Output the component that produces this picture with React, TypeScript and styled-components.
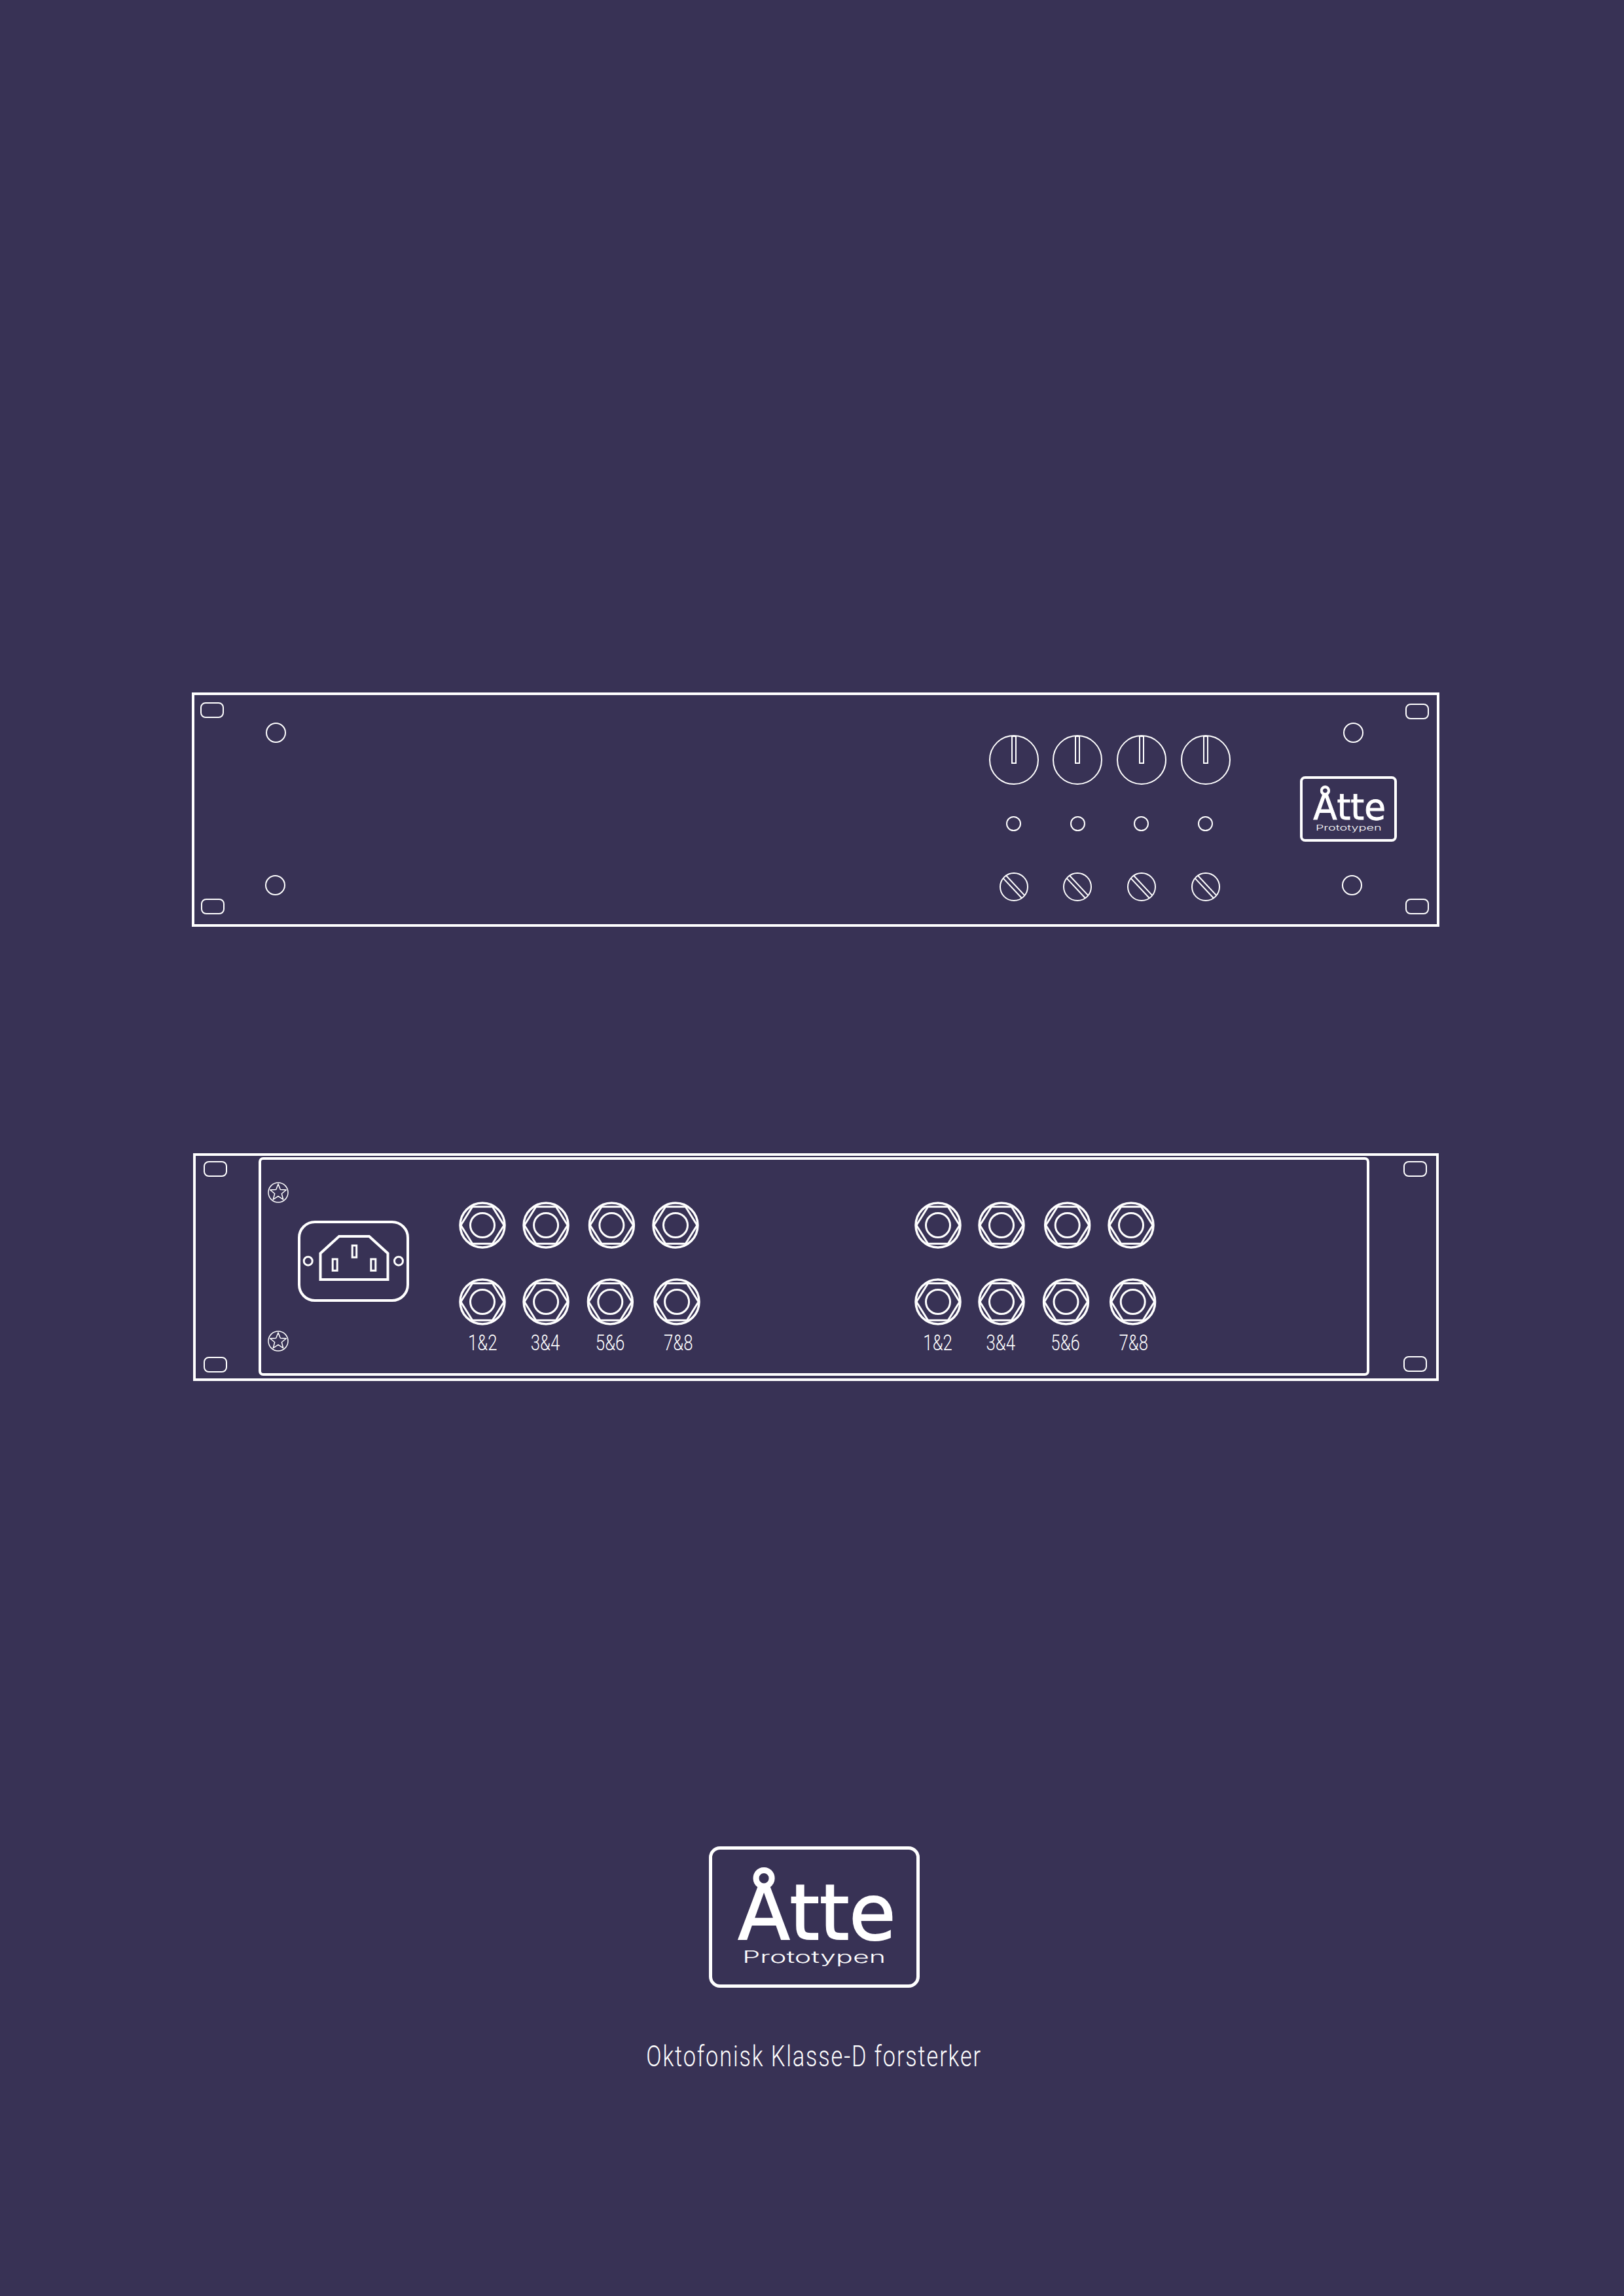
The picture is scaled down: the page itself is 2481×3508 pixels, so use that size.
import styled, { createGlobalStyle } from "styled-components";

const line = "#ffffff";
const background = "#383255";

const GlobalStyle = createGlobalStyle`
  html, body {
    margin: 0;
    padding: 0;
    background: ${background};
  }
  * {
    box-sizing: border-box;
  }
`;

const Page = styled.main`
  width: 2481px;
  height: 3508px;
  padding: 1058px 0 0 11px;
  display: flex;
  flex-direction: column;
  align-items: center;
  background: ${background};
  color: ${line};
  overflow: hidden;
`;

const FrontPanel = styled.section`
  width: 1906px;
  height: 358px;
  border: 4px solid ${line};
  display: flex;
`;

const RearPanel = styled.section`
  width: 1903px;
  height: 348px;
  margin-top: 346px;
  border: 4px solid ${line};
  display: flex;
`;

const EarColumn = styled.div<{ $width: number; $left: number; $top: number; $bottom: number }>`
  width: ${(p) => p.$width}px;
  padding: ${(p) => p.$top}px 0 ${(p) => p.$bottom}px ${(p) => p.$left}px;
  display: flex;
  flex-direction: column;
  justify-content: space-between;
  flex: none;
`;

const EarSlot = styled.span<{ $shift?: number }>`
  display: block;
  width: 36px;
  height: 24px;
  margin-left: ${(p) => p.$shift ?? 0}px;
  border: 2px solid ${line};
  border-radius: 8px;
`;

const MountColumn = styled.div`
  width: 31px;
  margin-left: 63px;
  padding: 42px 0 44px;
  display: flex;
  flex-direction: column;
  justify-content: space-between;
  flex: none;
`;

const MountHole = styled.span<{ $shift?: number }>`
  display: block;
  width: 31px;
  height: 31px;
  margin-left: ${(p) => p.$shift ?? 0}px;
  border: 2px solid ${line};
  border-radius: 50%;
`;

const ControlGrid = styled.div`
  width: 390.4px;
  height: 291px;
  margin: 50.5px 0 0 1063px;
  display: grid;
  grid-template-columns: repeat(4, 97.6px);
  grid-template-rows: repeat(3, 97px);
  place-items: center;
  flex: none;
`;

const LogoColumn = styled.div`
  width: 148px;
  margin-left: 95.6px;
  padding: 42px 0 44px;
  display: flex;
  flex-direction: column;
  justify-content: space-between;
  flex: none;
`;

const Drawing = styled.svg`
  display: block;
  flex: none;
  fill: none;
  stroke: ${line};
`;

const LedRing = styled.span`
  display: block;
  width: 23px;
  height: 23px;
  border: 2px solid ${line};
  border-radius: 50%;
`;

const BackPlate = styled.div`
  width: 1697px;
  height: 334px;
  margin-top: 2px;
  border: 4px solid ${line};
  border-radius: 7px;
  display: flex;
  flex: none;
`;

const ScrewColumn = styled.div`
  width: 32px;
  margin-left: 10.4px;
  padding: 34px 0 33px;
  display: flex;
  flex-direction: column;
  justify-content: space-between;
  flex: none;
`;

const InletBox = styled.div`
  margin: 93px 0 0 14.6px;
  flex: none;
`;

const JackGroup = styled.div<{ $left: number }>`
  width: 393.2px;
  margin: 64px 0 0 ${(p) => p.$left}px;
  display: grid;
  grid-template-columns: repeat(4, 98.3px);
  grid-template-rows: 72px 72px auto;
  row-gap: 45px;
  justify-items: center;
  flex: none;
`;

const JackSlot = styled.div<{ $dx: number }>`
  transform: translateX(${(p) => p.$dx}px);
`;

const PortLabel = styled.span<{ $dx: number }>`
  margin-top: -39px;
  font-family: Roboto, "Liberation Sans", sans-serif;
  font-size: 34px;
  font-weight: 300;
  line-height: 40px;
  white-space: nowrap;
  transform: translateX(${(p) => p.$dx}px) scaleX(0.76);
`;

const Footer = styled.footer`
  margin: 711px 4px 0 0;
  display: flex;
  flex-direction: column;
  align-items: center;
`;

const LogoBadge = styled.div<{ $u: number }>`
  width: ${(p) => p.$u * 321.6}px;
  height: ${(p) => p.$u * 216}px;
  padding-top: ${(p) => p.$u * 41}px;
  border: ${(p) => Math.max(4, p.$u * 5)}px solid ${line};
  border-radius: ${(p) => p.$u * 17}px;
  display: flex;
  flex-direction: column;
  align-items: center;
  flex: none;
`;

const LogoWord = styled.span<{ $u: number }>`
  margin-left: ${(p) => p.$u * 8}px;
  font-family: "DejaVu Sans", Inter, sans-serif;
  font-size: ${(p) => p.$u * 118}px;
  font-weight: 400;
  line-height: ${(p) => p.$u * 110}px;
  white-space: nowrap;
  -webkit-text-stroke: ${(p) => p.$u * 2}px ${line};
  transform: scaleX(0.98);
`;

const LogoSub = styled.span<{ $u: number }>`
  margin-top: ${(p) => p.$u * -1}px;
  font-family: Inter, "Liberation Sans", sans-serif;
  font-size: ${(p) => p.$u * 25}px;
  font-weight: 300;
  line-height: ${(p) => p.$u * 28}px;
  white-space: nowrap;
  transform: scaleX(1.72);
`;

const Tagline = styled.p`
  margin: 79px 0 0;
  font-family: Roboto, "Liberation Sans", sans-serif;
  font-size: 44px;
  font-weight: 300;
  line-height: 52px;
  letter-spacing: 2.4px;
  white-space: nowrap;
  transform: scaleX(0.78);
`;

const Knob = () => (
  <Drawing width={78} height={78} viewBox="-39 -39 78 78" strokeWidth={2}>
    <circle r={37} />
    <rect x={-3} y={-36} width={6} height={41} />
  </Drawing>
);

const TrimScrew = () => (
  <Drawing width={46} height={46} viewBox="-23 -23 46 46" strokeWidth={2}>
    <circle r={21} />
    <g transform="rotate(47)">
      <line x1={-20.8} y1={-3} x2={20.8} y2={-3} />
      <line x1={-20.8} y1={3} x2={20.8} y2={3} />
    </g>
  </Drawing>
);

const starPoints = Array.from({ length: 10 }, (_, i) => {
  const radius = i % 2 === 0 ? 13 : 5.6;
  const angle = (Math.PI / 5) * i - Math.PI / 2;
  return `${(radius * Math.cos(angle)).toFixed(2)},${(radius * Math.sin(angle)).toFixed(2)}`;
}).join(" ");

const StarScrew = () => (
  <Drawing width={32} height={32} viewBox="-16 -16 32 32" strokeWidth={1.5}>
    <circle r={15} />
    <polygon points={starPoints} strokeLinejoin="round" />
  </Drawing>
);

const Jack = () => (
  <Drawing width={72} height={72} viewBox="-36 -36 72 72">
    <circle r={34} strokeWidth={3.5} />
    <polygon points="-33,0 -15.3,-28.3 15.3,-28.3 33,0 15.3,28.3 -15.3,28.3" strokeWidth={3} />
    <circle r={18.5} strokeWidth={3} />
  </Drawing>
);

const PowerInlet = () => (
  <Drawing width={170} height={124} viewBox="0 0 170 124">
    <rect x={2} y={2} width={166} height={120} rx={24} strokeWidth={4} />
    <polygon points="34.5,50 63,24 109,24 137.5,50 137.5,90 34.5,90" strokeWidth={4} />
    <rect x={83.2} y={38} width={6.5} height={18} strokeWidth={3} />
    <rect x={53.2} y={58.8} width={7} height={17.5} strokeWidth={3} />
    <rect x={111.8} y={58.8} width={7} height={17.5} strokeWidth={3} />
    <circle cx={15.7} cy={61.7} r={6.5} strokeWidth={3} />
    <circle cx={154} cy={61.7} r={6.5} strokeWidth={3} />
  </Drawing>
);

const Logo = ({ u }: { u: number }) => (
  <LogoBadge $u={u}>
    <LogoWord $u={u}>Åtte</LogoWord>
    <LogoSub $u={u}>Prototypen</LogoSub>
  </LogoBadge>
);

const channels = [0, 1, 2, 3];
const portLabels = ["1&2", "3&4", "5&6", "7&8"];

const jackGroups = [
  {
    left: 62.45,
    top: [0, -0.9, 0.4, 0],
    bottom: [0, -0.9, -1.7, 2.1],
    labels: [0, -2.4, -1.2, 4],
  },
  {
    left: 302.9,
    top: [0, -1, 0.7, 0],
    bottom: [0, -1, -1.5, 2.7],
    labels: [-0.7, -2.5, -1.7, 3.4],
  },
];

export default function App() {
  return (
    <>
      <GlobalStyle />
      <Page>
        <FrontPanel>
          <EarColumn $width={46} $left={9} $top={11} $bottom={15}>
            <EarSlot />
            <EarSlot $shift={1} />
          </EarColumn>
          <MountColumn>
            <MountHole />
            <MountHole $shift={-1} />
          </MountColumn>
          <ControlGrid>
            {channels.map((c) => (
              <Knob key={c} />
            ))}
            {channels.map((c) => (
              <LedRing key={c} />
            ))}
            {channels.map((c) => (
              <TrimScrew key={c} />
            ))}
          </ControlGrid>
          <LogoColumn>
            <MountHole $shift={66} />
            <Logo u={0.46} />
            <MountHole $shift={64.5} />
          </LogoColumn>
          <EarColumn $width={49} $left={13} $top={13} $bottom={15}>
            <EarSlot />
            <EarSlot />
          </EarColumn>
        </FrontPanel>

        <RearPanel>
          <EarColumn $width={96} $left={12} $top={8} $bottom={9}>
            <EarSlot />
            <EarSlot />
          </EarColumn>
          <BackPlate>
            <ScrewColumn>
              <StarScrew />
              <StarScrew />
            </ScrewColumn>
            <InletBox>
              <PowerInlet />
            </InletBox>
            {jackGroups.map((group) => (
              <JackGroup key={group.left} $left={group.left}>
                {group.top.map((dx, i) => (
                  <JackSlot key={i} $dx={dx}>
                    <Jack />
                  </JackSlot>
                ))}
                {group.bottom.map((dx, i) => (
                  <JackSlot key={i} $dx={dx}>
                    <Jack />
                  </JackSlot>
                ))}
                {group.labels.map((dx, i) => (
                  <PortLabel key={i} $dx={dx}>
                    {portLabels[i]}
                  </PortLabel>
                ))}
              </JackGroup>
            ))}
          </BackPlate>
          <EarColumn $width={98} $left={52} $top={8} $bottom={10}>
            <EarSlot />
            <EarSlot />
          </EarColumn>
        </RearPanel>

        <Footer>
          <Logo u={1} />
          <Tagline>Oktofonisk Klasse-D forsterker</Tagline>
        </Footer>
      </Page>
    </>
  );
}
